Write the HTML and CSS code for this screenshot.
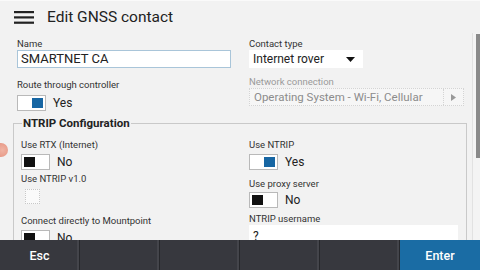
FILE: index.html
```html
<!DOCTYPE html>
<html lang="en">
<head>
    <meta charset="UTF-8">
    <title>Edit GNSS contact</title>
    <link rel="stylesheet" href="styles.css">
</head>
<body>
    <div class="touch-dot"></div>

    <header class="topbar">
        <svg class="menu-icon" width="20" height="13" viewBox="0 0 20 13">
            <rect x="0" y="0" width="20" height="2.2" fill="#222"/>
            <rect x="0" y="5.3" width="20" height="2.2" fill="#222"/>
            <rect x="0" y="10.6" width="20" height="2.2" fill="#222"/>
        </svg>
        <h1>Edit GNSS contact</h1>
    </header>

    <div class="body-row">
        <main class="content">
            <div class="top-grid">
                <div class="col">
                    <label class="lbl">Name</label>
                    <div class="text-input active">SMARTNET CA</div>
                    <label class="lbl lbl-route">Route through controller</label>
                    <div class="switch-row sw-route">
                        <span class="switch on"><span class="knob"></span></span>
                        <span>Yes</span>
                    </div>
                </div>
                <div class="col">
                    <label class="lbl">Contact type</label>
                    <div class="select">
                        <span>Internet rover</span>
                        <svg width="9" height="5" viewBox="0 0 9 5"><path d="M0 0h9L4.5 5z" fill="#111"/></svg>
                    </div>
                    <label class="lbl lbl-net disabled">Network connection</label>
                    <div class="picker">
                        <span class="picker-text">Operating System - Wi-Fi, Cellular</span>
                        <span class="picker-arrow">
                            <svg width="5" height="7" viewBox="0 0 5 7"><path d="M0 0l5 3.5L0 7z" fill="#999"/></svg>
                        </span>
                    </div>
                </div>
            </div>

            <fieldset class="group">
                <legend>NTRIP Configuration</legend>
                <div class="group-grid">
                    <div class="col">
                        <label class="lbl">Use RTX (Internet)</label>
                        <div class="switch-row">
                            <span class="switch"><span class="knob"></span></span>
                            <span>No</span>
                        </div>
                        <label class="lbl lbl-v1">Use NTRIP v1.0</label>
                        <span class="checkbox"></span>
                        <label class="lbl lbl-direct">Connect directly to Mountpoint</label>
                        <div class="switch-row">
                            <span class="switch"><span class="knob"></span></span>
                            <span>No</span>
                        </div>
                    </div>
                    <div class="col">
                        <label class="lbl">Use NTRIP</label>
                        <div class="switch-row">
                            <span class="switch on"><span class="knob"></span></span>
                            <span>Yes</span>
                        </div>
                        <label class="lbl lbl-proxy">Use proxy server</label>
                        <div class="switch-row sw-proxy">
                            <span class="switch"><span class="knob"></span></span>
                            <span>No</span>
                        </div>
                        <label class="lbl lbl-user">NTRIP username</label>
                        <div class="text-input user">?</div>
                    </div>
                </div>
            </fieldset>
        </main>
        <div class="scroll-track"><div class="scroll-thumb"></div></div>
    </div>

    <footer class="softkeys">
        <div class="key">Esc</div>
        <div class="key"></div>
        <div class="key"></div>
        <div class="key"></div>
        <div class="key"></div>
        <div class="key primary">Enter</div>
    </footer>
</body>
</html>
```

FILE: styles.css
```css
body {
    margin: 0;
    width: 480px;
    height: 270px;
    overflow: hidden;
    font-family: Roboto, "Noto Sans", sans-serif;
    background-color: #f2f2f2;
    color: #222;
    display: flex;
    flex-direction: column;
    position: relative;
}

.touch-dot {
    position: absolute;
    left: -6px;
    top: 143px;
    width: 14px;
    height: 14px;
    border-radius: 50%;
    background: radial-gradient(circle at 60% 50%, #f0b4a4, #e48f7c);
    z-index: 5;
}

.topbar {
    height: 33px;
    flex: none;
    display: flex;
    align-items: center;
    padding-left: 14px;
    border-top: 1px solid #fafafa;
    box-sizing: border-box;
}

.menu-icon {
    margin-top: 1px;
}

.topbar h1 {
    margin: 0 0 0 13px;
    font-size: 15.5px;
    font-weight: 400;
    color: #222;
}

.body-row {
    flex: 1;
    display: flex;
    min-height: 0;
}

.content {
    flex: 1;
    overflow: hidden;
    padding: 5px 0 0 13px;
}

.scroll-track {
    width: 7px;
    flex: none;
    border-left: 1px solid #e2e2e2;
    margin-left: 5px;
    background: #f4f4f4;
    display: flex;
    justify-content: flex-end;
}

.scroll-thumb {
    width: 4px;
    height: 124px;
    margin-top: 1px;
    background: #8a8a8a;
}

.top-grid {
    display: grid;
    grid-template-columns: 232px 214px;
    padding-left: 4px;
    align-items: start;
}

.col {
    display: flex;
    flex-direction: column;
    align-items: flex-start;
}

.lbl {
    font-size: 9.5px;
    line-height: 12px;
    color: #333;
}

.lbl.disabled {
    color: #9a9a9a;
}

.lbl-route {
    margin-top: 11px;
}

.lbl-net {
    margin-top: 8px;
}

.text-input {
    box-sizing: border-box;
    width: 214px;
    height: 18px;
    background: #fff;
    font-size: 13px;
    line-height: 16px;
    padding-left: 3px;
    border: 1px solid #fff;
}

.text-input.active {
    border-color: #a9c5d9;
}

.text-input.user {
    width: 209px;
    height: 20px;
    padding-top: 2px;
    font-size: 12px;
}

.select {
    box-sizing: border-box;
    width: 114px;
    height: 18px;
    background: #fff;
    font-size: 12px;
    display: flex;
    align-items: center;
    justify-content: space-between;
    padding: 0 8px 0 4px;
}

.picker {
    box-sizing: border-box;
    width: 215px;
    height: 18px;
    border: 1px dotted #d4d4d4;
    background: #f6f6f6;
    font-size: 11.5px;
    color: #8c8c8c;
    display: flex;
    align-items: center;
    padding-left: 4px;
}

.picker-text {
    flex: 1;
    white-space: nowrap;
    overflow: hidden;
}

.picker-arrow {
    width: 19px;
    height: 100%;
    border-left: 1px dotted #d4d4d4;
    display: flex;
    align-items: center;
    justify-content: center;
}

.switch-row {
    display: flex;
    align-items: center;
    gap: 7px;
    font-size: 12px;
    margin-top: 3px;
}

.sw-route {
    margin-top: 4px;
}

.switch {
    box-sizing: border-box;
    width: 29px;
    height: 16px;
    border: 1px solid #b9b9b9;
    background: #fff;
    padding: 2px;
    display: flex;
}

.switch .knob {
    width: 11px;
    height: 10px;
    background: #111;
}

.switch.on {
    justify-content: flex-end;
}

.switch.on .knob {
    background: #1766a3;
}

.group {
    margin: 5px 0 0 0;
    width: 454px;
    box-sizing: border-box;
    border: 1px solid #c9c9c9;
    padding: 0 0 0 7px;
}

.group legend {
    font-size: 11.5px;
    font-weight: 700;
    line-height: 14px;
    padding: 0 1px;
    margin-left: 1px;
}

.group-grid {
    display: grid;
    grid-template-columns: 228px 1fr;
    padding-top: 9px;
}

.lbl-v1 {
    margin-top: 3px;
}

.checkbox {
    box-sizing: border-box;
    width: 15px;
    height: 15px;
    margin: 4px 0 0 4px;
    border: 1px dotted #c8c8c8;
    background: #fafafa;
}

.lbl-direct {
    margin-top: 11px;
}

.lbl-proxy {
    margin-top: 8px;
}

.sw-proxy {
    margin-top: 2px;
}

.lbl-user {
    margin-top: 5px;
}

.softkeys {
    height: 30px;
    flex: none;
    display: flex;
    background: #37383e;
}

.key {
    width: 80px;
    box-sizing: border-box;
    border-right: 1px solid #26272b;
    box-shadow: inset -2px 0 0 #44454b;
    color: #fff;
    font-size: 12.5px;
    font-weight: 500;
    display: flex;
    align-items: center;
    justify-content: center;
}

.key.primary {
    background: #1a6ca4;
    border-right: none;
    box-shadow: none;
}
```
